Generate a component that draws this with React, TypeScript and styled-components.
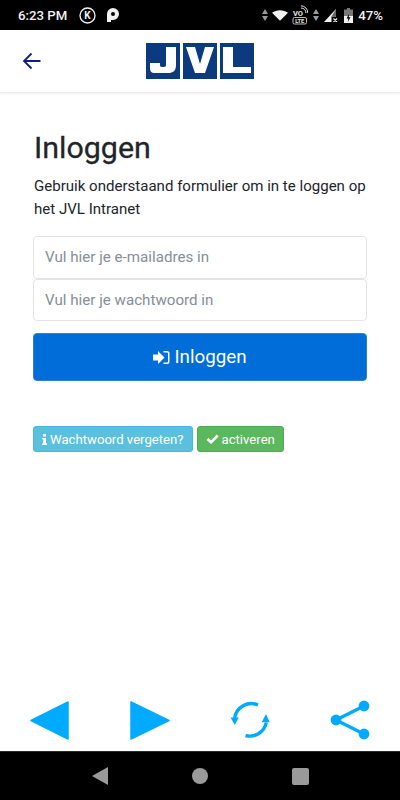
import React from "react";
import styled, { createGlobalStyle } from "styled-components";

const Global = createGlobalStyle`
  html, body { margin: 0; padding: 0; background: #fff; }
  * { box-sizing: border-box; }
`;

const Screen = styled.div`
  width: 400px;
  height: 800px;
  display: flex;
  flex-direction: column;
  font-family: Roboto, "Liberation Sans", sans-serif;
  background: #fff;
  overflow: hidden;
`;

const StatusBar = styled.div`
  height: 30px;
  flex: none;
  background: #000;
  color: #f2f2f2;
  display: flex;
  align-items: center;
  padding: 0 17px 0 18px;
  font-size: 13.2px;
  font-weight: 500;
`;

const StatusLeft = styled.div`
  display: flex;
  align-items: center;
`;

const StatusRight = styled.div`
  margin-left: auto;
  display: flex;
  align-items: center;
`;

const Header = styled.header`
  height: 63px;
  flex: none;
  background: #fff;
  border-bottom: 1px solid #eee;
  box-shadow: 0 1px 2px rgba(0, 0, 0, 0.06);
  display: flex;
  align-items: center;
  padding: 0 0 0 22px;
`;

const Logo = styled.div`
  margin-left: 104px;
  display: flex;
  gap: 3px;
`;

const Main = styled.main`
  flex: 1;
  padding: 37px 33px 0 33px;
`;

const Title = styled.h1`
  margin: 0;
  font-size: 30.4px;
  line-height: 36px;
  font-weight: 400;
  color: #212529;
  padding-left: 1px;
  -webkit-text-stroke: 0.3px #212529;
`;

const Intro = styled.p`
  margin: 9px 0 15px;
  font-size: 15.05px;
  line-height: 23px;
  color: #212529;
  padding-left: 1px;
`;

const Field = styled.input`
  display: block;
  width: 100%;
  height: 42.5px;
  padding: 0 11px;
  border: 1.5px solid #e1e3e5;
  border-radius: 4px;
  font: 400 15.15px Roboto, sans-serif;
  color: #495057;
  outline: none;
  &::placeholder { color: #868e96; opacity: 1; }
`;

const LoginButton = styled.button`
  width: 100%;
  height: 48px;
  margin-top: 12px;
  background: #006dd9;
  border: 1px solid #2f7fd6;
  border-radius: 4px;
  color: #fff;
  font: 400 18.8px Roboto, sans-serif;
  display: flex;
  align-items: center;
  justify-content: center;
  gap: 4px;
`;

const Badges = styled.div`
  display: flex;
  gap: 4px;
  margin-top: 45px;
`;

const Badge = styled.span<{ $bg: string; $edge: string }>`
  height: 26px;
  background: ${(p) => p.$bg};
  border: 1px solid ${(p) => p.$edge};
  border-radius: 3px;
  color: #fff;
  font-size: 13.15px;
  display: flex;
  align-items: center;
  gap: 3px;
  padding: 0 8px;
`;

const BottomBar = styled.nav`
  height: 60px;
  flex: none;
  display: flex;
  align-items: flex-start;
  justify-content: space-between;
  padding: 9px 30px 0;
  background: #fff;
`;

const SystemNav = styled.div`
  height: 49px;
  flex: none;
  background: #000;
  border-top: 1px solid #2a2a2a;
  display: flex;
  align-items: center;
  justify-content: center;
  gap: 84px;
`;

const StatusText = styled.span`
  letter-spacing: 0;
`;

const StatusItem = styled.span<{ $gap: number }>`
  display: flex;
  margin-left: ${(p) => p.$gap}px;
`;

const ArrowIcon = () => (
  <svg width="20" height="20" viewBox="0 0 20 20" fill="none" stroke="#10207a" strokeWidth="1.8">
    <path d="M18.500 10H2M9.500 2.500 2 10l7.500 7.500" />
  </svg>
);

const SignIn = () => (
  <svg width="17" height="15" viewBox="0 0 17 15" fill="#fff">
    <path d="M0 4.500h5V1l6.500 6.500L5 14v-3.500H0z" />
    <path d="M10.500 1H14a2.500 2.500 0 0 1 2.500 2.500v8A2.500 2.500 0 0 1 14 14h-3.500v-1.500H14a1 1 0 0 0 1-1v-8a1 1 0 0 0-1-1h-3.500z" />
  </svg>
);

const Info = () => (
  <svg width="5" height="11" viewBox="0 0 5 11" fill="#fff">
    <rect x="1.200" y="0" width="2.800" height="2.600" />
    <path d="M0 4h4v5.500h1V11H0V9.500h1.200V5.300H0z" />
  </svg>
);

const Check = () => (
  <svg width="13" height="10" viewBox="0 0 13 10" fill="none" stroke="#fff" strokeWidth="2.600">
    <path d="M1.500 5 5 8.300 11.700 1.500" />
  </svg>
);

const Triangle = ({ dir }: { dir: "l" | "r" }) => (
  <svg width="40" height="40" viewBox="0 0 40 40" fill="#00aaff">
    <path stroke="#00aaff" strokeWidth="1.500" strokeLinejoin="round" d={dir === "l" ? "M38 2v37L1 20.500z" : "M1 2v37L39 20.500z"} />
  </svg>
);

const Refresh = () => (
  <svg width="40" height="40" viewBox="0 0 40 40" fill="none" stroke="#00aaff" strokeWidth="3.400">
    <path d="M28 5A16.800 16.800 0 0 0 4.700 18" />
    <path d="M15.500 35.500A16.800 16.800 0 0 0 36.300 22.500" />
    <path stroke="none" fill="#00aaff" d="M.5 17.500h8.300l-4 7.500zM31.700 22.200h8L36 14z" />
  </svg>
);

const Share = () => (
  <svg width="40" height="40" viewBox="0 0 40 40" fill="#00aaff">
    <circle cx="6" cy="20" r="5.400" />
    <circle cx="34" cy="6" r="5.400" />
    <circle cx="34" cy="34" r="5.400" />
    <path d="M6 20 34 6M6 20l28 14" stroke="#00aaff" strokeWidth="3.400" />
  </svg>
);

const KIcon = () => (
  <svg width="17" height="17" viewBox="0 0 17 17">
    <circle cx="8.500" cy="8.500" r="7.500" fill="none" stroke="#f2f2f2" strokeWidth="1.300" />
    <text x="8.500" y="12" textAnchor="middle" fontSize="10" fontWeight="700" fill="#f2f2f2" fontFamily="Roboto">K</text>
  </svg>
);

const PIcon = () => (
  <svg width="12" height="14" viewBox="0 0 12 14" fill="#f2f2f2">
    <path fillRule="evenodd" d="M0 6a6 6 0 1 1 6 6H4v2H0zM6 4a2 2 0 1 0 0 4 2 2 0 0 0 0-4z" />
  </svg>
);

const Updown = () => (
  <svg width="6" height="12" viewBox="0 0 6 12" fill="#9a9a9a">
    <path d="M3 0l3 5H0zM3 12l3-5H0z" />
  </svg>
);

const Wifi = () => (
  <svg width="16" height="11" viewBox="0 0 18 12" fill="#f2f2f2">
    <path d="M0 3C5-1 13-1 18 3L9 12z" />
  </svg>
);

const Volte = () => (
  <svg width="16" height="20" viewBox="0 0 16 20" fill="none" stroke="#e8e8e8">
    <rect x="1" y="12.500" width="13.500" height="6.500" rx="1.500" strokeWidth="0.800" />
    <text x="7.700" y="17.700" textAnchor="middle" fontSize="5.500" fontWeight="700" fill="#e8e8e8" stroke="none" fontFamily="Roboto">LTE</text>
    <text x="1" y="11" fontSize="7.500" fontWeight="700" fill="#e8e8e8" stroke="none" fontFamily="Roboto">VO</text>
    <path d="M9 3a5 5 0 0 1 5 5M9 .8A7 7 0 0 1 15.800 8" strokeWidth="1" />
  </svg>
);

const Signal = () => (
  <svg width="14" height="14" viewBox="0 0 14 14">
    <path d="M0 14 12 1v7.500H7.500V14z" fill="#f2f2f2" />
    <path d="M12 1v7.500H7.500" fill="#666" />
    <path d="M9.500 10.500l3.500 3.500M13 10.500l-3.500 3.500" stroke="#f2f2f2" strokeWidth="1.200" />
  </svg>
);

const Battery = () => (
  <svg width="9" height="15" viewBox="0 0 9 15">
    <path d="M3 0h3v1.500h3V15H0V1.500h3z" fill="#777" />
    <path d="M0 8h9v7H0z" fill="#f2f2f2" />
    <path d="M5 6 2.500 10.500H4.300L3.800 14 6.500 9.300H4.800z" fill="#000" />
  </svg>
);

const LogoLetter = ({ d, w }: { d: string; w: number }) => (
  <svg width={w} height="36" viewBox={`0 0 ${w} 36`}>
    <rect width={w} height="36" fill="#0b3a7e" />
    <path d={d} fill="#fff" />
  </svg>
);

export default function App() {
  return (
    <Screen>
      <Global />
      <StatusBar>
        <StatusLeft>
          <StatusText>6:23 PM</StatusText>
          <StatusItem $gap={12}><KIcon /></StatusItem>
          <StatusItem $gap={11}><PIcon /></StatusItem>
        </StatusLeft>
        <StatusRight>
          <Updown />
          <StatusItem $gap={4}><Wifi /></StatusItem>
          <StatusItem $gap={4}><Volte /></StatusItem>
          <StatusItem $gap={5}><Updown /></StatusItem>
          <StatusItem $gap={5}><Signal /></StatusItem>
          <StatusItem $gap={6}><Battery /></StatusItem>
          <StatusItem $gap={5}><StatusText>47%</StatusText></StatusItem>
        </StatusRight>
      </StatusBar>
      <Header>
        <ArrowIcon />
        <Logo>
          <LogoLetter w={34} d="M20 4h10v18c0 6-3 8-8 8H9c-4 0-5-2-5-5v-5h10v2c0 1 .5 2 2 2h2c1.500 0 2-1 2-2z" />
          <LogoLetter w={34} d="M3 4h9l5 17 5-17h9l-9 26H12z" />
          <LogoLetter w={34} d="M3 4h10v20h18v6H3z" />
        </Logo>
      </Header>
      <Main>
        <Title>Inloggen</Title>
        <Intro>Gebruik onderstaand formulier om in te loggen op het JVL Intranet</Intro>
        <Field placeholder="Vul hier je e-mailadres in" />
        <Field placeholder="Vul hier je wachtwoord in" />
        <LoginButton>
          <SignIn />
          Inloggen
        </LoginButton>
        <Badges>
          <Badge $bg="#5bc0de" $edge="#46b8da">
            <Info />
            Wachtwoord vergeten?
          </Badge>
          <Badge $bg="#5cb85c" $edge="#4cae4c">
            <Check />
            activeren
          </Badge>
        </Badges>
      </Main>
      <BottomBar>
        <Triangle dir="l" />
        <Triangle dir="r" />
        <Refresh />
        <Share />
      </BottomBar>
      <SystemNav>
        <svg width="16" height="18" viewBox="0 0 16 18" fill="#9a9a9a"><path d="M16 0v18L0 9z" /></svg>
        <svg width="16" height="16" viewBox="0 0 16 16" fill="#9a9a9a"><circle cx="8" cy="8" r="8" /></svg>
        <svg width="17" height="17" viewBox="0 0 17 17" fill="#9a9a9a"><rect width="17" height="17" rx="2" /></svg>
      </SystemNav>
    </Screen>
  );
}
